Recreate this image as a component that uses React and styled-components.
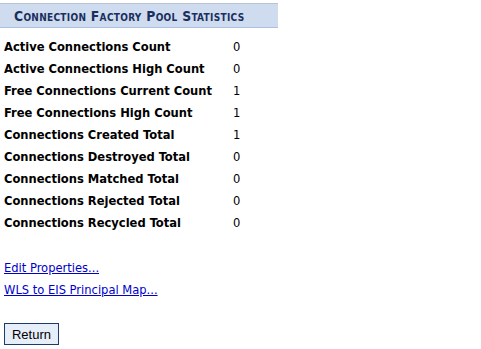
import React from "react";
import styled, { createGlobalStyle } from "styled-components";

const Global = createGlobalStyle`
  body {
    margin: 0;
    background: #fff;
    font-family: "DejaVu Sans", Verdana, sans-serif;
  }
`;

const Page = styled.div`
  width: 481px;
  padding-top: 3px;
`;

const Header = styled.div`
  width: 278px;
  height: 25px;
  box-sizing: border-box;
  background: #cfdcef;
  border-top: 1px solid #b8c4d4;
  border-bottom: 1px solid #a9c0e0;
  display: flex;
  align-items: center;
  padding-left: 14px;
  font-family: "DejaVu Sans Condensed", "DejaVu Sans", sans-serif;
  font-size: 13.8px;
  font-weight: bold;
  font-variant: small-caps;
  color: #1b2f5e;
  letter-spacing: 0.3px;
`;

const Stats = styled.div`
  display: grid;
  grid-template-columns: 229px auto;
  grid-auto-rows: 22px;
  align-items: center;
  padding: 7px 0 0 4px;
  font-size: 12.8px;
  font-family: "DejaVu Sans Condensed", "DejaVu Sans", sans-serif;
`;

const Label = styled.div`
  font-weight: bold;
  color: #000;
`;

const Value = styled.div`
  color: #000;
`;

const Links = styled.div`
  display: flex;
  flex-direction: column;
  gap: 7px;
  padding: 27px 0 0 4px;
`;

const Link = styled.a`
  font-size: 12.8px;
  line-height: 15px;
  color: #0000cc;
  text-decoration: underline;
  font-family: "DejaVu Sans Condensed", "DejaVu Sans", sans-serif;
`;

const Button = styled.button`
  margin: 26px 0 0 4px;
  width: 55px;
  height: 22px;
  background: #e6eefa;
  border: 1px solid #1c3a6b;
  font-family: "Liberation Sans", Arial, sans-serif;
  font-size: 13px;
  color: #000;
  padding: 0;
`;

const stats = [
  ["Active Connections Count", 0],
  ["Active Connections High Count", 0],
  ["Free Connections Current Count", 1],
  ["Free Connections High Count", 1],
  ["Connections Created Total", 1],
  ["Connections Destroyed Total", 0],
  ["Connections Matched Total", 0],
  ["Connections Rejected Total", 0],
  ["Connections Recycled Total", 0],
];

export default function App() {
  return (
    <Page>
      <Global />
      <Header>Connection Factory Pool Statistics</Header>
      <Stats>
        {stats.map(([label, value]) => (
          <React.Fragment key={label}>
            <Label>{label}</Label>
            <Value>{value}</Value>
          </React.Fragment>
        ))}
      </Stats>
      <Links>
        <Link href="#">Edit Properties...</Link>
        <Link href="#">WLS to EIS Principal Map...</Link>
      </Links>
      <Button>Return</Button>
    </Page>
  );
}
